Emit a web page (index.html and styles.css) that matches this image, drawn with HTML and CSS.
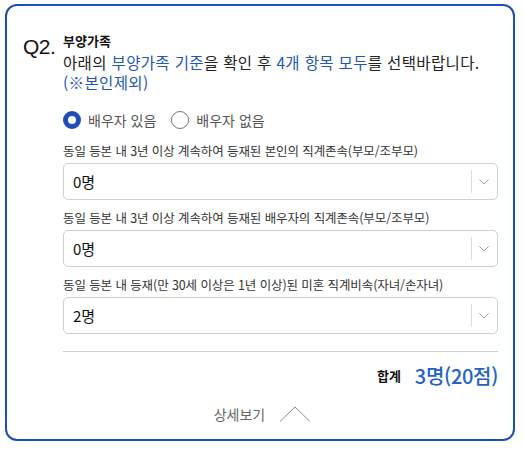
FILE: index.html
```html
<!DOCTYPE html>
<html lang="ko">
<head>
<meta charset="utf-8">
<link rel="stylesheet" href="styles.css">
</head>
<body>
<div class="card">
  <div class="q">
    <div class="qnum">Q2.</div>
    <div class="qbody">
      <div class="title">부양가족</div>
      <p class="desc">아래의 <span class="hl">부양가족 기준</span>을 확인 후 <span class="hl">4개 항목 모두</span>를 선택바랍니다.<br><span class="hl">(※본인제외)</span></p>
      <div class="radios">
        <label class="radio checked"><span class="dot"></span>배우자 있음</label>
        <label class="radio"><span class="dot"></span>배우자 없음</label>
      </div>
      <div class="field first">
        <div class="label">동일 등본 내 3년 이상 계속하여 등재된 본인의 직계존속(부모/조부모)</div>
        <div class="select"><span class="val">0명</span><span class="sep"></span><svg class="chev" width="10" height="6" viewBox="0 0 10 6"><path d="M0.5 0.5 L5 5 L9.5 0.5" fill="none" stroke="#9a9a9a" stroke-width="1"/></svg></div>
      </div>
      <div class="field">
        <div class="label">동일 등본 내 3년 이상 계속하여 등재된 배우자의 직계존속(부모/조부모)</div>
        <div class="select"><span class="val">0명</span><span class="sep"></span><svg class="chev" width="10" height="6" viewBox="0 0 10 6"><path d="M0.5 0.5 L5 5 L9.5 0.5" fill="none" stroke="#9a9a9a" stroke-width="1"/></svg></div>
      </div>
      <div class="field">
        <div class="label">동일 등본 내 등재(만 30세 이상은 1년 이상)된 미혼 직계비속(자녀/손자녀)</div>
        <div class="select"><span class="val">2명</span><span class="sep"></span><svg class="chev" width="10" height="6" viewBox="0 0 10 6"><path d="M0.5 0.5 L5 5 L9.5 0.5" fill="none" stroke="#9a9a9a" stroke-width="1"/></svg></div>
      </div>
      <div class="rule"></div>
      <div class="total"><span class="tlabel">합계</span><span class="tval">3명(20점)</span></div>
    </div>
  </div>
  <div class="more"><span>상세보기</span><svg class="up" width="32" height="16" viewBox="0 0 32 16"><path d="M1 15.5 L16 1 L31 15.5" fill="none" stroke="#8a8a8a" stroke-width="1"/></svg></div>
</div>
</body>
</html>
```

FILE: styles.css
```css
* { box-sizing: border-box; }
html, body { margin: 0; padding: 0; background: #fff; }
body {
  font-family: "Noto Sans CJK KR", "Noto Sans", sans-serif;
  color: #222;
  padding: 4px 9px 0 5px;
}
.card {
  width: 510px;
  height: 437px;
  border: 2px solid #1c4fb4;
  border-radius: 12px;
  padding: 25px 15px 0 16px;
}
.q { display: flex; }
.qnum {
  width: 40px;
  flex: none;
  font-family: "Liberation Sans", "Noto Sans", sans-serif;
  font-size: 21px;
  line-height: 24px;
  margin-top: 4px;
  color: #111;
  letter-spacing: -0.5px;
}
.qbody { flex: 1; min-width: 0; }
.title {
  font-size: 13px;
  font-weight: 700;
  line-height: 20px;
  color: #111;
}
.desc {
  margin: 1px 0 0;
  font-size: 15.5px;
  line-height: 20px;
  color: #222;
  letter-spacing: 0.35px;
}
.hl { color: #2456b3; }
.radios {
  display: flex;
  gap: 15px;
  margin-top: 18px;
  height: 20px;
  align-items: center;
}
.radio {
  display: flex;
  align-items: center;
  gap: 7px;
  font-size: 14px;
  color: #555;
  line-height: 20px;
}
.dot {
  width: 18px;
  height: 18px;
  border-radius: 50%;
  border: 1px solid #777;
  background: #fff;
}
.radio.checked .dot { border: 5px solid #1c4fb4; }
.field { margin-top: 10px; }
.field.first { margin-top: 13px; }
.label {
  font-size: 12.5px;
  line-height: 16px;
  color: #333;
  letter-spacing: -0.1px;
}
.select {
  margin-top: 4px;
  height: 37px;
  border: 1px solid #cfcfcf;
  border-radius: 5px;
  display: flex;
  align-items: center;
  padding: 0 8px 0 9px;
}
.val { flex: 1; font-size: 15px; color: #111; }
.sep {
  width: 1px;
  height: 23px;
  background: #dcdcdc;
  margin-right: 7px;
}
.chev { display: block; }
.rule {
  margin-top: 17px;
  height: 1px;
  background: #cfcfcf;
}
.total {
  margin-top: 11px;
  height: 24px;
  display: flex;
  justify-content: flex-end;
  align-items: center;
  gap: 14px;
}
.tlabel { font-size: 13px; font-weight: 700; color: #111; }
.tval { font-size: 20px; font-weight: 500; color: #2462c4; letter-spacing: -0.3px; }
.more {
  margin-top: 17px;
  display: flex;
  justify-content: center;
  align-items: center;
  gap: 14px;
  font-size: 14px;
  color: #666;
  padding-left: 4px;
}
.up { display: block; }
```
